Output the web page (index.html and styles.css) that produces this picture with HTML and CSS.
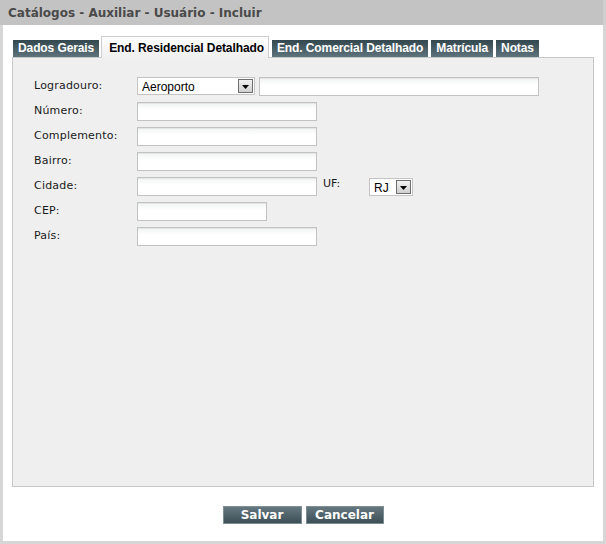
FILE: index.html
```html
<!DOCTYPE html>
<html lang="pt">
<head>
<meta charset="utf-8">
<title>Catálogos - Auxiliar - Usuário - Incluir</title>
<link rel="stylesheet" href="styles.css">
</head>
<body>
<div class="window">
  <div class="titlebar">Catálogos - Auxiliar - Usuário - Incluir</div>
  <div class="content">
    <div class="tabs">
      <div class="tab">Dados Gerais</div>
      <div class="tab active">End. Residencial Detalhado</div>
      <div class="tab">End. Comercial Detalhado</div>
      <div class="tab">Matrícula</div>
      <div class="tab">Notas</div>
    </div>
    <div class="panel">
      <div class="row">
        <label class="lbl">Logradouro:</label>
        <div class="select sel-log"><span class="sel-text">Aeroporto</span><span class="arrow"><svg width="7" height="4" viewBox="0 0 7 4"><path d="M0 0H7L3.5 4Z" fill="#000"/></svg></span></div>
        <input class="inp inp-log" type="text">
      </div>
      <div class="row">
        <label class="lbl">Número:</label>
        <input class="inp inp-med" type="text">
      </div>
      <div class="row">
        <label class="lbl">Complemento:</label>
        <input class="inp inp-med" type="text">
      </div>
      <div class="row">
        <label class="lbl">Bairro:</label>
        <input class="inp inp-med" type="text">
      </div>
      <div class="row">
        <label class="lbl">Cidade:</label>
        <input class="inp inp-med" type="text">
        <label class="lbl-uf">UF:</label>
        <div class="select sel-uf"><span class="sel-text">RJ</span><span class="arrow"><svg width="7" height="4" viewBox="0 0 7 4"><path d="M0 0H7L3.5 4Z" fill="#000"/></svg></span></div>
      </div>
      <div class="row">
        <label class="lbl">CEP:</label>
        <input class="inp inp-short" type="text">
      </div>
      <div class="row">
        <label class="lbl">País:</label>
        <input class="inp inp-med" type="text">
      </div>
    </div>
    <div class="actions">
      <button class="btn btn-save">Salvar</button>
      <button class="btn btn-cancel">Cancelar</button>
    </div>
  </div>
</div>
</body>
</html>
```
FILE: styles.css
```css
html, body {
  margin: 0;
  padding: 0;
  background: #ffffff;
}
.window {
  width: 606px;
  height: 544px;
  box-sizing: border-box;
  border-left: 3px solid #d6d6d6;
  border-right: 3px solid #d6d6d6;
  border-bottom: 3px solid #d6d6d6;
  display: flex;
  flex-direction: column;
  background: #ffffff;
}
.titlebar {
  height: 25px;
  margin: 0 -3px;
  padding-left: 8px;
  background: #c3c3c3;
  color: #4a4a4a;
  font-family: "DejaVu Sans", Verdana, sans-serif;
  font-weight: bold;
  font-size: 12px;
  line-height: 26px;
  border-right: 3px solid #cfcfcf;
}
.content {
  flex: 1;
  padding: 11px 9px 0 9px;
  display: flex;
  flex-direction: column;
}
.tabs {
  display: flex;
  align-items: flex-end;
  height: 21px;
  padding-left: 1px;
  position: relative;
  z-index: 1;
}
.tab {
  height: 17px;
  line-height: 17px;
  padding: 0 5px;
  margin-right: 3px;
  font-family: "Liberation Sans", Arial, sans-serif;
  font-weight: bold;
  font-size: 12px;
  letter-spacing: -0.1px;
  color: #ffffff;
  background: linear-gradient(#33474f, #5e737b);
  white-space: nowrap;
}
.tab:first-child {
  margin-right: 2px;
}
.tab.active {
  height: 22px;
  line-height: 23px;
  margin-bottom: -1px;
  box-sizing: border-box;
  border: 1px solid #cdcdcd;
  border-bottom: none;
  padding: 0 4px 0 7px;
  color: #000000;
  background: linear-gradient(#ffffff, #efefef);
}
.panel {
  height: 430px;
  box-sizing: border-box;
  background: #efefef;
  border: 1px solid #c8c8c8;
  padding: 19px 0 0 21px;
  display: flex;
  flex-direction: column;
  gap: 6px;
}
.row {
  display: flex;
  align-items: flex-start;
  height: 19px;
}
.lbl {
  width: 103px;
  font-family: "DejaVu Sans", Verdana, sans-serif;
  font-size: 11px;
  letter-spacing: 0.2px;
  color: #1a1a1a;
  line-height: 17px;
}
.inp {
  height: 19px;
  box-sizing: border-box;
  margin: 0;
  padding: 0 3px;
  border: 1px solid #c2c2c2;
  background: linear-gradient(#f1f3f3, #ffffff 7px);
  box-shadow: inset 0 1px 0 #e4e6e6;
  outline: none;
}
.inp-med { width: 180px; }
.inp-short { width: 130px; }
.inp-log { width: 280px; margin-left: 4px; }
.select {
  height: 18px;
  box-sizing: border-box;
  border: 1px solid #c4c4c4;
  background: #ffffff;
  display: flex;
  align-items: center;
  justify-content: space-between;
  padding: 0 1px 0 4px;
}
.sel-text {
  font-family: "Liberation Sans", Arial, sans-serif;
  font-size: 12px;
  color: #000000;
  line-height: 16px;
  padding-top: 2px;
}
.arrow {
  width: 15px;
  height: 14px;
  box-sizing: border-box;
  border: 1px solid #6e6e6e;
  background: linear-gradient(#f2f2f2, #cfcfcf);
  display: flex;
  align-items: center;
  justify-content: center;
  padding-top: 2px;
}
.sel-log { width: 118px; }
.sel-uf { width: 44px; margin-top: 1px; }
.lbl-uf {
  width: 46px;
  margin-left: 6px;
  font-family: "DejaVu Sans", Verdana, sans-serif;
  font-size: 11px;
  color: #1a1a1a;
  line-height: 14px;
}
.actions {
  display: flex;
  justify-content: center;
  gap: 4px;
  padding-top: 19px;
}
.btn {
  height: 18px;
  box-sizing: border-box;
  margin: 0;
  padding: 0;
  border: 1px solid #7f8e93;
  background: linear-gradient(#65787f, #3c4f56);
  color: #ffffff;
  font-family: "DejaVu Sans", Verdana, sans-serif;
  font-weight: bold;
  font-size: 12px;
  line-height: 15px;
  cursor: pointer;
}
.btn-save { width: 79px; }
.btn-cancel { width: 78px; }
```
